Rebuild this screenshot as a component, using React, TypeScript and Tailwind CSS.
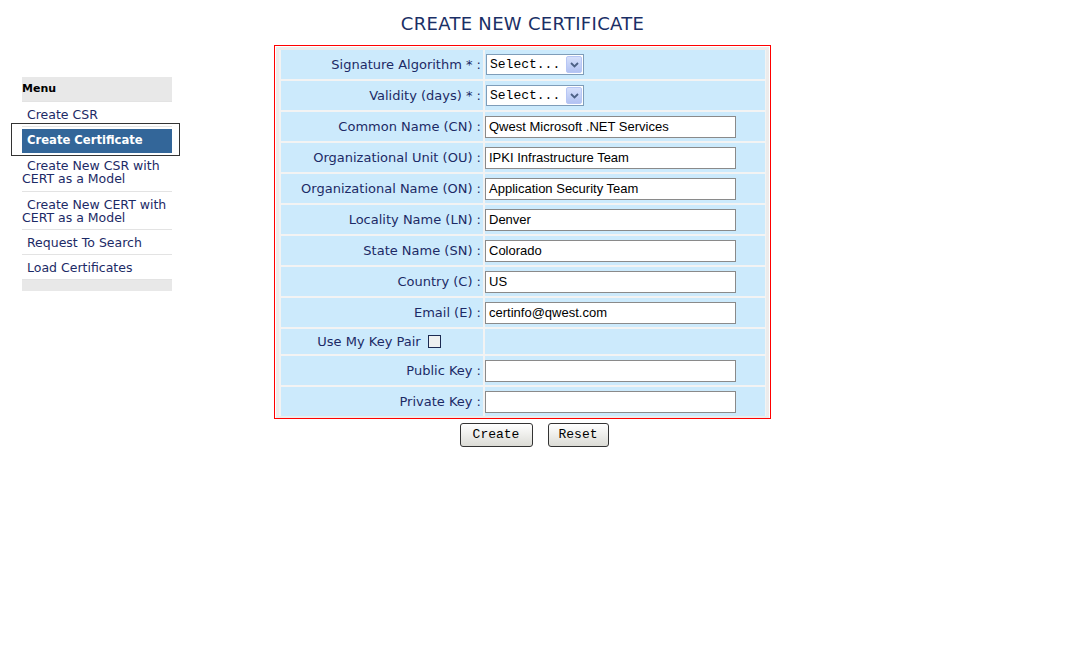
import React from 'react';

const menuItems = [
  { label: 'Create CSR', pb: 'pb-[5px]' },
  { label: 'Create Certificate', active: true, pb: '' },
  { label: 'Create New CSR with CERT as a Model', pb: 'pb-[6px]' },
  { label: 'Create New CERT with CERT as a Model', pb: 'pb-[5px]' },
  { label: 'Request To Search', pb: 'pb-[5px]' },
  { label: 'Load Certificates', pb: 'pb-[5px]' },
];

const fields = [
  { label: 'Common Name (CN)', value: 'Qwest Microsoft .NET Services' },
  { label: 'Organizational Unit (OU)', value: 'IPKI Infrastructure Team' },
  { label: 'Organizational Name (ON)', value: 'Application Security Team' },
  { label: 'Locality Name (LN)', value: 'Denver' },
  { label: 'State Name (SN)', value: 'Colorado' },
  { label: 'Country (C)', value: 'US' },
  { label: 'Email (E)', value: 'certinfo@qwest.com' },
];

function SelectBox() {
  return (
    <div className="ml-[1px] flex h-[21px] w-[98px] items-center border border-[#7f9db9] bg-white pl-[3px] pr-[1px]">
      <span className="flex-1 font-['Liberation_Mono',monospace] text-[13px] leading-none text-black">Select...</span>
      <span className="flex h-[17px] w-[16px] items-center justify-center rounded-[2px] border border-[#b7c6f5] bg-gradient-to-b from-[#d6e0fb] to-[#b2c2f2]">
        <svg width="9" height="6" viewBox="0 0 9 6">
          <path d="M1 1 L4.5 4.5 L8 1" fill="none" stroke="#4d6185" strokeWidth="1.8" />
        </svg>
      </span>
    </div>
  );
}

function TextBox({ value = '' }: { value?: string }) {
  return (
    <div className="flex h-[22px] w-[251px] items-center border border-[#8a8a8a] bg-white pl-[3px] font-['Liberation_Sans',Arial,sans-serif] text-[13px] text-black">
      {value}
    </div>
  );
}

function Row({ label, children }: { label: React.ReactNode; children?: React.ReactNode }) {
  return (
    <div className="flex h-[29px] gap-[2px]">
      <div className="flex w-[202px] items-center justify-end bg-[#cceafc] pr-[2px] text-[13px] text-[#1c2a66]">
        {label}
      </div>
      <div className="flex flex-1 items-center bg-[#cceafc]">{children}</div>
    </div>
  );
}

export default function App() {
  return (
    <div className="min-h-screen bg-white font-['DejaVu_Sans',Verdana,sans-serif]">
      <div className="flex">
        {/* Side menu */}
        <nav className="relative ml-[22px] mt-[77px] w-[150px]">
          <div className="flex h-[25px] items-center border-b border-[#e3e3e3] bg-[#e8e8e8] text-[11px] font-bold text-black">Menu</div>
          {menuItems.map((item) =>
            item.active ? (
              <div key={item.label} className="relative pt-[2px]">
                <div className="flex h-[24px] items-center bg-[#336699] pl-[5px] text-[11.6px] font-bold text-white">
                  {item.label}
                </div>
                {/* highlight outline */}
                <div className="absolute -left-[11px] -right-[8px] -top-[4px] -bottom-[3px] border border-[#333]" />
              </div>
            ) : (
              <div
                key={item.label}
                className={`border-b border-[#e3e3e3] pt-[6px] indent-[5px] text-[12.5px] leading-[13px] text-[#1c2a66] ${item.pb}`}
              >
                {item.label}
              </div>
            )
          )}
          <div className="h-[11px] bg-[#e8e8e8]" />
        </nav>

        {/* Main form */}
        <main className="ml-[102px] w-[497px]">
          <h1 className="mt-[14px] mb-[11px] text-center text-[18px] leading-[20px] tracking-[0.3px] text-[#1a2f66]">CREATE NEW CERTIFICATE</h1>
          <div className="border border-[#ff0000] bg-white p-[1px] pb-0">
            <div className="flex flex-col gap-[2px] border-[3px] border-b-[2px] border-[#ececec] bg-[#f3f3f3] pl-[2px] pr-[1px]">
              <Row label="Signature Algorithm * :">
                <SelectBox />
              </Row>
              <Row label="Validity (days) * :">
                <SelectBox />
              </Row>
              {fields.map((f) => (
                <Row key={f.label} label={`${f.label} :`}>
                  <TextBox value={f.value} />
                </Row>
              ))}
              <div className="flex h-[25px] gap-[2px]">
                <div className="flex w-[202px] items-center justify-center gap-[7px] bg-[#cceafc] pr-[6px] text-[13px] text-[#1c2a66]">
                  Use My Key Pair
                  <span className="h-[13px] w-[13px] border border-[#1c2a51] bg-[#eef0f0]" />
                </div>
                <div className="flex-1 bg-[#cceafc]" />
              </div>
              <Row label="Public Key :">
                <TextBox />
              </Row>
              <Row label="Private Key :">
                <TextBox />
              </Row>
            </div>
          </div>
          <div className="mt-[4px] flex justify-center gap-[15px] pl-[23px]">
            <button className="h-[24px] w-[73px] rounded-[3px] border border-[#333] bg-gradient-to-b from-[#ffffff] to-[#dcdcd6] font-['Liberation_Mono',monospace] text-[13px] text-black">
              Create
            </button>
            <button className="h-[24px] w-[61px] rounded-[3px] border border-[#333] bg-gradient-to-b from-[#ffffff] to-[#dcdcd6] font-['Liberation_Mono',monospace] text-[13px] text-black">
              Reset
            </button>
          </div>
        </main>
      </div>
    </div>
  );
}
